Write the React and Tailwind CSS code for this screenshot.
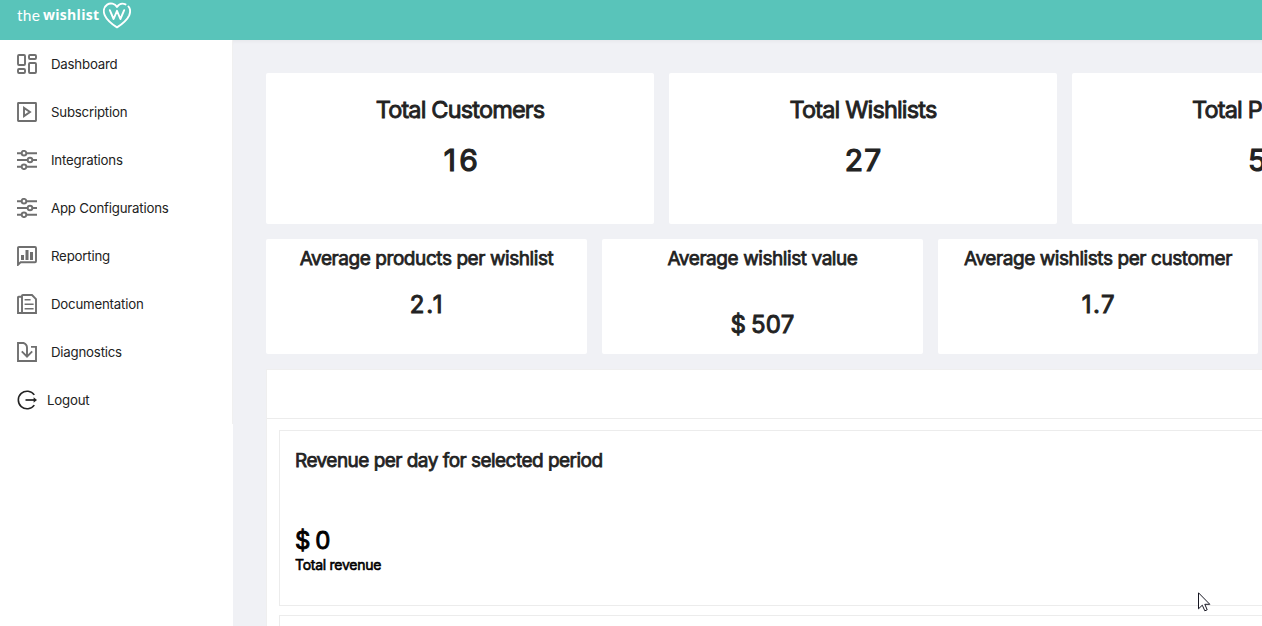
import React from "react";

const Icon = ({ children, className = "text-[#6f6f6f]" }) => (
  <svg width="20" height="20" viewBox="0 0 20 20" fill="none" stroke="currentColor" strokeWidth="1.9" className={"shrink-0 " + className}>
    {children}
  </svg>
);

const DashboardIcon = () => (
  <Icon>
    <rect x="1" y="1" width="7" height="10" rx="1" />
    <rect x="12" y="1" width="7" height="4" rx="1" />
    <rect x="1" y="15" width="7" height="4" rx="1" />
    <rect x="12" y="9" width="7" height="10" rx="1" />
  </Icon>
);

const PlayIcon = () => (
  <Icon>
    <rect x="1" y="1" width="18" height="18" rx="0.4" />
    <path d="M7 5.9v8.2L13 10z" />
  </Icon>
);

const SlidersIcon = () => (
  <Icon>
    <path d="M0 3.2h4.7M9.3 3.2H20M0 10h10.7M15.3 10H20M0 16.8h4.7M9.3 16.8H20" />
    <circle cx="7" cy="3.2" r="2.3" />
    <circle cx="13" cy="10" r="2.3" />
    <circle cx="7" cy="16.8" r="2.3" />
  </Icon>
);

const ReportIcon = () => (
  <Icon>
    <path d="M1 18.8V2q0-1 1-1h16q1 0 1 1v13.2q0 1.1-1 1.1H3.6z" />
    <path d="M5.5 9v5M10 4v10M14.5 6v8" strokeWidth="3" />
  </Icon>
);

const DocumentIcon = () => (
  <Icon>
    <path d="M5 19V2q0-1 1-1h9l4 4.2V19H1V3.3q0-.6.6-.6H5" />
    <path d="M7.6 5.7h6M7.6 10.2h9M7.6 14.7h9" strokeWidth="1.6" />
  </Icon>
);

const DiagnosticsIcon = () => (
  <Icon>
    <path d="M14 4.9h5V19H1V1h5.5q3.5 1.2 3.5 4.8v8.6M4.8 9.4l5.2 5.2 5.2-5.2" />
  </Icon>
);

const LogoutIcon = () => (
  <Icon className="text-[#222222]">
    <path d="M17.3 4.9A8.8 8.8 0 1 0 17.3 15.1" strokeWidth="1.6" />
    <path d="M8.5 10H18" strokeWidth="1.7" />
    <path d="M16.6 7.3L20 10l-3.4 2.7z" fill="currentColor" stroke="none" />
  </Icon>
);

const menu = [
  ["Dashboard", DashboardIcon],
  ["Subscription", PlayIcon],
  ["Integrations", SlidersIcon],
  ["App Configurations", SlidersIcon],
  ["Reporting", ReportIcon],
  ["Documentation", DocumentIcon],
  ["Diagnostics", DiagnosticsIcon],
  ["Logout", LogoutIcon],
];

const totals = [
  ["Total Customers", "16", "tracking-[3.4px] indent-[5px]"],
  ["Total Wishlists", "27", "tracking-[1px] indent-[1px]"],
  ["Total Products", "57", "tracking-[0.5px]"],
];

const averages = [
  ["Average products per wishlist", "2.1", "mt-[19px] tracking-[1.7px] indent-[1px]"],
  ["Average wishlist value", "$ 507", "mt-[39px] tracking-[0.2px] [word-spacing:-2px]"],
  ["Average wishlists per customer", "1.7", "mt-[19px] tracking-[1.5px] indent-[2px]"],
];

function Header() {
  return (
    <header className="relative z-10 flex h-10 shrink-0 items-start bg-[#59c4ba] pl-[17px] text-white">
      <div className="flex h-[30px] items-center whitespace-nowrap leading-[30px]">
        <span className="w-[26px] font-['Lato',sans-serif] text-[15.5px] tracking-[0.3px]">the</span>
        <span className="w-[60px] font-['Open_Sans',sans-serif] text-[14px] font-bold tracking-[0.3px]">wishlist</span>
        <svg width="28" height="27" viewBox="0 0 28 27" fill="none" stroke="currentColor" strokeWidth="1.9" strokeLinecap="round" strokeLinejoin="round" className="mt-px">
          <path d="M22.5 2.4C19.2 .9 15.9 2.1 14 4.9C11.8 1.6 7.5 0.4 4.2 2.6C0.6 5 .1 9.5 1.8 13.3C4 18.2 9.6 22.5 14 25.4C18.4 22.5 24 18.2 26.2 13.3C27.5 10.1 27.3 6.7 25.5 4.5" />
          <path d="M6.8 8.2l3.8 8.8L14 8.8l3.4 8.2 3.8-8.8" />
        </svg>
      </div>
    </header>
  );
}

function Sidebar() {
  return (
    <aside className="w-[233px] shrink-0 bg-white">
      <nav className="w-[233px] border-r border-[#f0f0f0] text-[13.25px] tracking-[-0.21px] text-[#222222]">
        {menu.map(([label, Glyph]) => (
          <a key={label} className={label === "Logout" ? "flex h-12 items-center gap-[10px] pl-[17px]" : "flex h-12 items-center gap-[14px] pl-[17px]"}>
            <Glyph />
            <span className="pt-[2px]">{label}</span>
          </a>
        ))}
      </nav>
    </aside>
  );
}

export default function App() {
  return (
    <div className="relative flex h-[626px] w-[1262px] flex-col overflow-hidden bg-[#f0f1f5] font-['Inter',sans-serif] text-[#222222]">
      <Header />
      <div className="flex min-h-0 flex-1">
        <Sidebar />
        <main className="min-w-0 flex-1 overflow-hidden pl-[33px] pt-[33px] shadow-[inset_0_4px_4px_-3px_rgba(0,0,0,0.05)]">
          <section className="flex w-[1194px] gap-[15px]">
            {totals.map(([title, value, spacing]) => (
              <div key={title} className="h-[151px] w-[388px] shrink-0 rounded-[2px] bg-white pt-[22px] text-center">
                <h2 className="text-[23.5px] leading-[30px] tracking-[-0.84px] [-webkit-text-stroke:0.85px_currentColor]">{title}</h2>
                <p className={"mt-[15px] text-[30px] leading-10 [-webkit-text-stroke:1.2px_currentColor] " + spacing}>{value}</p>
              </div>
            ))}
          </section>
          <section className="mt-[15px] flex w-[1194px] gap-[15px]">
            {averages.map(([title, value, spacing]) => (
              <div key={title} className="h-[115px] w-[321px] shrink-0 rounded-[2px] bg-white pt-[8px] text-center last:w-[320px]">
                <h3 className="text-[19px] leading-6 tracking-[-0.43px] [-webkit-text-stroke:0.75px_currentColor]">{title}</h3>
                <p className={"text-[24px] leading-[30px] [-webkit-text-stroke:0.9px_currentColor] " + spacing}>{value}</p>
              </div>
            ))}
          </section>
          <section className="mt-[15px] h-[300px] w-[1194px] border border-[#efefef] bg-white">
            <div className="h-[49px] border-b border-[#ececec]" />
            <div className="pl-3 pt-[11px]">
              <div className="h-[176px] border border-[#ececec] pl-[15px] pt-[18px]">
                <h3 className="text-[19px] leading-6 tracking-[-0.53px] [-webkit-text-stroke:0.75px_currentColor]">Revenue per day for selected period</h3>
                <p className="mt-[53px] text-[24px] leading-[30px] text-black [word-spacing:-2px] [-webkit-text-stroke:0.9px_currentColor]">$ 0</p>
                <p className="-mt-px text-[14px] leading-5 tracking-[-0.27px] text-black [-webkit-text-stroke:0.6px_currentColor]">Total revenue</p>
              </div>
              <div className="mt-[9px] h-[60px] border border-[#ececec]" />
            </div>
          </section>
        </main>
      </div>
      <svg width="13" height="20" viewBox="0 0 13 20" className="absolute left-[1198px] top-[592px]">
        <path d="M.5.8v16l3.8-3.6 2.5 5.6 2.4-1-2.4-5.5h5z" fill="#fff" stroke="#161622" strokeWidth="1" />
      </svg>
    </div>
  );
}
